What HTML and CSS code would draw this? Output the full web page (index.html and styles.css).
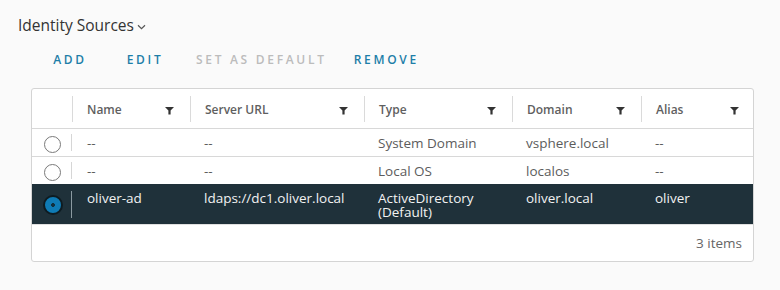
FILE: index.html
```html
<!DOCTYPE html>
<html lang="en">
<head>
<meta charset="utf-8">
<title>Identity Sources</title>
<link rel="stylesheet" href="styles.css">
</head>
<body>
<div class="page">
  <h1 class="title">Identity Sources <svg class="chev" width="9" height="6" viewBox="0 0 9 6"><path d="M1 1.2 L4.5 4.6 L8 1.2" fill="none" stroke="#555" stroke-width="1.2"/></svg></h1>
  <div class="actions">
    <button class="btn">ADD</button>
    <button class="btn">EDIT</button>
    <button class="btn disabled">SET AS DEFAULT</button>
    <button class="btn">REMOVE</button>
  </div>
  <div class="grid">
    <div class="row head">
      <div class="hcell sel-h"></div>
      <div class="hcell"><div class="hin">Name<svg class="filter" width="9" height="9" viewBox="0 0 9 9"><path d="M0 1 H9 L5.6 4.6 V8.6 H3.4 V4.6 Z" fill="#333"/></svg></div></div>
      <div class="hcell"><div class="hin">Server URL<svg class="filter" width="9" height="9" viewBox="0 0 9 9"><path d="M0 1 H9 L5.6 4.6 V8.6 H3.4 V4.6 Z" fill="#333"/></svg></div></div>
      <div class="hcell"><div class="hin">Type<svg class="filter" width="9" height="9" viewBox="0 0 9 9"><path d="M0 1 H9 L5.6 4.6 V8.6 H3.4 V4.6 Z" fill="#333"/></svg></div></div>
      <div class="hcell"><div class="hin">Domain<svg class="filter" width="9" height="9" viewBox="0 0 9 9"><path d="M0 1 H9 L5.6 4.6 V8.6 H3.4 V4.6 Z" fill="#333"/></svg></div></div>
      <div class="hcell"><div class="hin last">Alias<svg class="filter" width="9" height="9" viewBox="0 0 9 9"><path d="M0 1 H9 L5.6 4.6 V8.6 H3.4 V4.6 Z" fill="#333"/></svg></div></div>
    </div>
    <div class="row">
      <div class="sel"><span class="radio"></span></div>
      <div class="cell">--</div>
      <div class="cell">--</div>
      <div class="cell">System Domain</div>
      <div class="cell">vsphere.local</div>
      <div class="cell">--</div>
    </div>
    <div class="row">
      <div class="sel"><span class="radio"></span></div>
      <div class="cell">--</div>
      <div class="cell">--</div>
      <div class="cell">Local OS</div>
      <div class="cell">localos</div>
      <div class="cell">--</div>
    </div>
    <div class="row selected">
      <div class="sel"><span class="radio on"></span></div>
      <div class="cell">oliver-ad</div>
      <div class="cell">ldaps://dc1.oliver.local</div>
      <div class="cell two"><span>ActiveDirectory</span><span>(Default)</span></div>
      <div class="cell">oliver.local</div>
      <div class="cell">oliver</div>
    </div>
    <div class="footer">3 items</div>
  </div>
</div>
</body>
</html>
```

FILE: styles.css
```css
* { box-sizing: border-box; }
body {
  margin: 0;
  background: #fafafa;
  font-family: "Open Sans", "Liberation Sans", sans-serif;
  color: #565656;
}
.page {
  padding: 14px 26px 0 31px;
  width: 780px;
}
.title {
  margin: 0 0 0 -13px;
  font-size: 15.5px;
  font-weight: 400;
  color: #333;
  line-height: 22px;
  display: flex;
  align-items: center;
  gap: 3px;
}
.chev { margin-top: 3px; }
.actions {
  display: flex;
  gap: 3px;
  margin: 12px 0 0 3px;
  height: 24px;
}
.btn {
  min-width: 72px;
  padding: 0 12px;
  border: 0;
  background: transparent;
  font-family: inherit;
  font-size: 12px;
  font-weight: 600;
  letter-spacing: 2.7px;
  color: #1d7ea8;
  height: 24px;
  line-height: 24px;
}
.btn.disabled { color: #bcbcbc; }
.grid {
  margin-top: 16px;
  width: 723px;
  background: #fff;
  border: 1px solid #d4d4d4;
  border-radius: 3px;
}
.row {
  display: grid;
  grid-template-columns: 40px 118px 174px 148px 129px 1fr;
  border-top: 1px solid #d8d8d8;
}
.row.head { border-top: 0; height: 39px; }
.hcell {
  padding: 7px 0 6px;
}
.hin {
  height: 26px;
  border-left: 1px solid #dadada;
  padding: 0 16px 0 14px;
  display: flex;
  align-items: center;
  justify-content: space-between;
  font-weight: 600;
  font-size: 12px;
  color: #5f5f5f;
}
.hin.last { padding-right: 14px; }
.filter { margin-top: 3px; }
.sel {
  margin: 5px 0;
  border-right: 1px solid #d6d6d6;
  display: flex;
  align-items: center;
  justify-content: center;
  padding-left: 2px;
}
.radio {
  width: 17px;
  height: 17px;
  margin: -2px 0;
  position: relative;
  top: 2px;
  border-radius: 50%;
  border: 1px solid #7a7a7a;
  background: #fff;
}
.radio.on {
  width: 20px;
  height: 20px;
  top: 0;
  border: 2px solid #0e1c22;
  background: radial-gradient(circle, #12303e 0 1.6px, #0f7bb5 2.2px);
}
.row.selected .sel { margin: 6px 0; }
.cell {
  padding: 7px 10px 6px 14px;
  line-height: 14px;
  font-size: 13.5px;
  color: #5c5c5c;
  white-space: nowrap;
}
.cell.two { display: flex; flex-direction: column; }
.row .cell:nth-child(2) { padding-left: 15px; }
.row.selected { background: #1f313a; border-top-color: #1f313a; }
.row.selected .cell { color: #f2f2f2; padding-top: 6px; padding-bottom: 5px; }
.row.selected .cell:nth-child(2) { padding-left: 15px; }
.row.selected .sel { border-right-color: #8b9aa1; }
.footer {
  border-top: 1px solid #e0e0e0;
  height: 37px;
  display: flex;
  align-items: center;
  justify-content: flex-end;
  padding-right: 11px;
  font-size: 13.5px;
  color: #666;
}
```
